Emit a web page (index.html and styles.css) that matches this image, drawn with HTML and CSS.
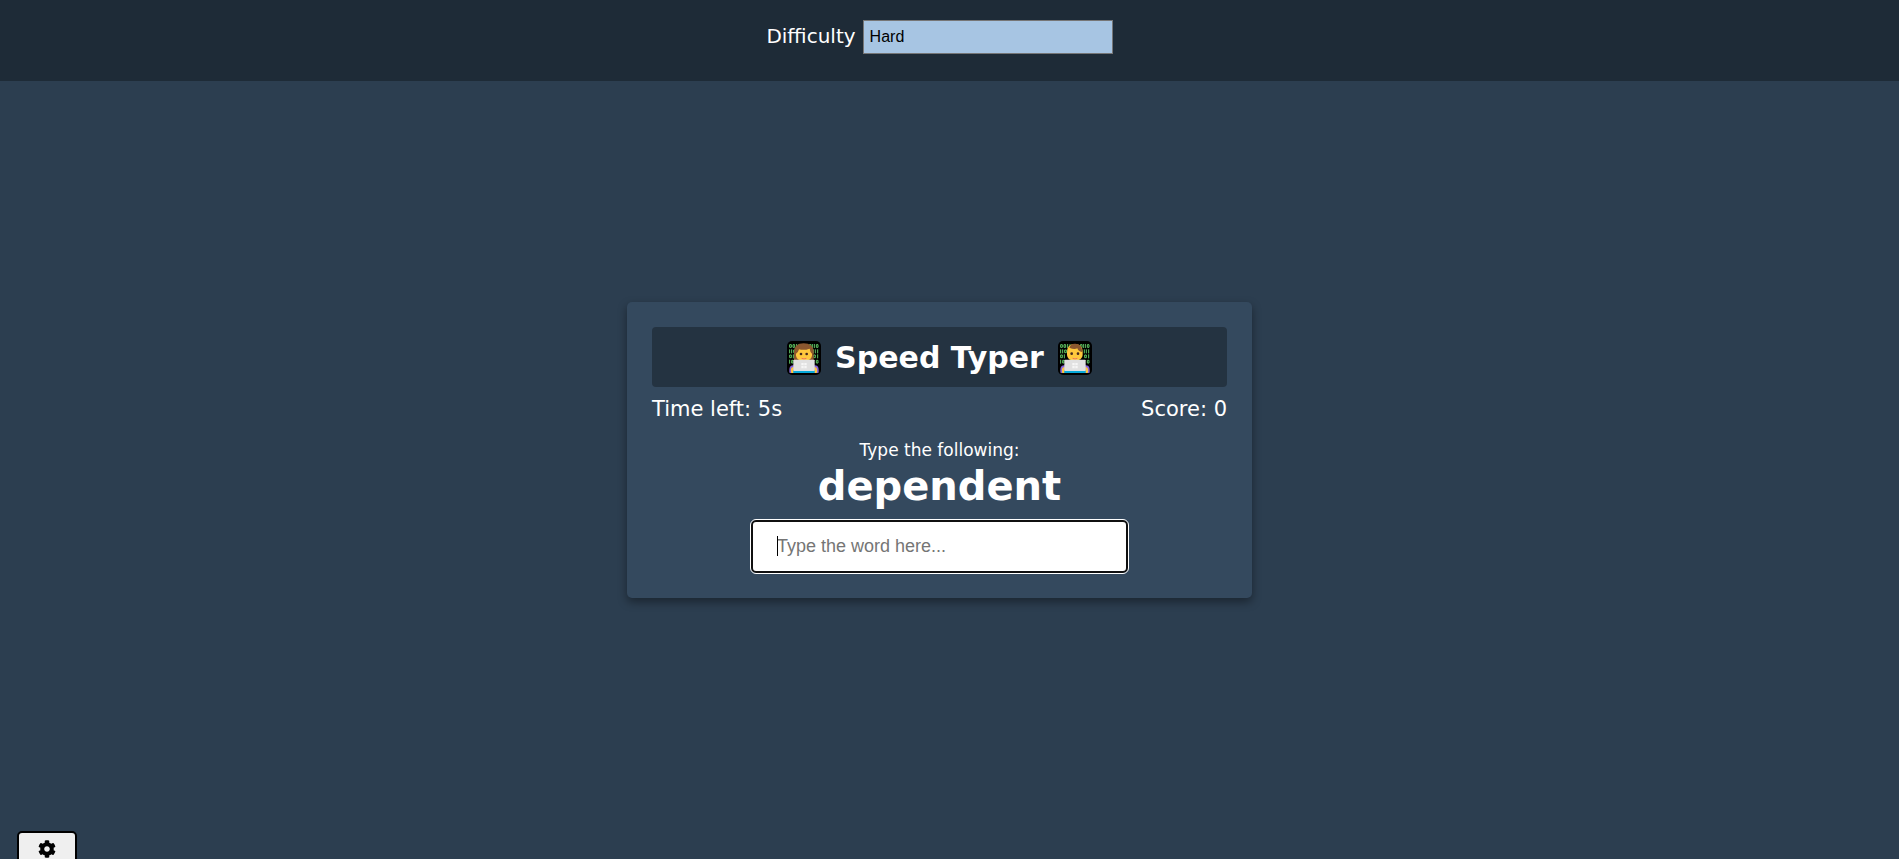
FILE: index.html
```html
<!DOCTYPE html>
<html lang="en">
<head>
<meta charset="utf-8">
<title>Speed Typer</title>
<link rel="stylesheet" href="styles.css">
</head>
<body>
<svg class="defs" aria-hidden="true">
  <symbol id="screen" viewBox="0 0 102 102">
    <rect width="102" height="102" rx="15" fill="#000"/>
    <g fill="none" stroke="#5fc563" stroke-width="3">
      <path d="M8 11h5v8H8zM18 11h5v8h-5zM29 9v12M36 9v12M67 11h5v8h-5zM76 9v12M82 9v12M88 11h5v8h-5z"/>
      <path d="M8 25v12M14 25v12M20 27h5v8h-5zM79 25v12M85 25v12M92 25v12"/>
      <path d="M8 42h5v8H8zM19 40v12M80 42h5v8h-5zM92 40v12"/>
      <path d="M8 56v12M14 58h4v8h-4zM88 58h5v8h-5z"/>
    </g>
  </symbol>
  <symbol id="laptop" viewBox="0 0 102 102">
    <path d="M7 94V86q0-13 13-13h62q13 0 13 13v8q0 2-3 2H10q-3 0-3-2z" fill="#8765d6"/>
    <path d="M12 94V84q1-6 8-6v18h-6zM90 94V84q-1-6-8-6v18h6z" fill="#ffc83d"/>
    <rect x="19" y="88" width="64" height="8" fill="#08a9da"/>
    <rect x="19" y="56" width="64" height="34" rx="2" fill="#e1e1e1"/>
    <path d="M43 66h7v7h-7zM52 66h7v7h-7zM43 75h7v7h-7zM52 75h7v7h-7z" fill="#f6f6f6"/>
  </symbol>
</svg>

<header class="settings">
  <form class="settings-form">
    <label for="difficulty">Difficulty</label>
    <select id="difficulty" class="difficulty">
      <option>Easy</option>
      <option>Medium</option>
      <option selected>Hard</option>
    </select>
  </form>
</header>

<main class="stage">
  <section class="card">
    <h1 class="title">
      <svg class="emoji" viewBox="0 0 102 102" role="img" aria-label="Woman technologist">
        <use href="#screen"/>
        <path d="M21 57V31Q22 8 50 7q29 1 30 24v26z" fill="#8b572f"/>
        <path d="M27 38q7-4 9-13 15 4 32-2 1 9 7 15v6q-2 15-24 15T27 44z" fill="#ffc83d"/>
        <circle cx="42" cy="39" r="4" fill="#46291f"/><circle cx="59" cy="39" r="4" fill="#46291f"/>
        <path d="M44 52q7 4 14 0" fill="none" stroke="#ef7059" stroke-width="3"/>
        <use href="#laptop"/>
      </svg>
      <span>Speed Typer</span>
      <svg class="emoji" viewBox="0 0 102 102" role="img" aria-label="Man technologist">
        <use href="#screen"/>
        <path d="M27 34q0-25 23-25 24 0 24 25v8q-1 17-24 17-22 0-23-17z" fill="#ffc83d"/>
        <path d="M34 20Q37 7 52 8q19 1 20 18v7Q61 32 58 22q-9 5-24-2z" fill="#8b572f"/>
        <circle cx="41" cy="38" r="4" fill="#46291f"/><circle cx="60" cy="38" r="4" fill="#46291f"/>
        <path d="M44 52q7 4 14 0" fill="none" stroke="#ef7059" stroke-width="3"/>
        <use href="#laptop"/>
      </svg>
    </h1>
    <div class="stats">
      <span>Time left: 5s</span>
      <span>Score: 0</span>
    </div>
    <label class="prompt" for="word">Type the following:</label>
    <h2 class="word">dependent</h2>
    <div class="entry">
      <input id="word" class="word-input" type="text" placeholder="Type the word here..." autocomplete="off">
      <span class="caret" aria-hidden="true"></span>
    </div>
  </section>
</main>

<button class="gear" type="button" aria-label="Toggle settings">
  <svg class="gear-icon" viewBox="0 0 512 512" aria-hidden="true"><path d="M487.400 315.700l-42.600-24.600c4.300-23.200 4.300-47 0-70.200l42.600-24.600c4.900-2.800 7.100-8.600 5.500-14-11.100-35.600-30-67.800-54.700-94.600-3.800-4.100-10-5.100-14.800-2.300L380.800 110c-17.900-15.400-38.500-27.300-60.800-35.100V25.800c0-5.600-3.900-10.500-9.400-11.700-36.700-8.200-74.300-7.800-109.200 0-5.500 1.200-9.400 6.100-9.400 11.700V75c-22.200 7.900-42.800 19.800-60.800 35.100L88.700 85.500c-4.900-2.800-11-1.900-14.800 2.300-24.700 26.700-43.600 58.900-54.700 94.600-1.700 5.400.6 11.200 5.500 14L67.300 221c-4.300 23.200-4.300 47 0 70.200l-42.600 24.600c-4.900 2.800-7.100 8.600-5.500 14 11.100 35.600 30 67.800 54.700 94.600 3.800 4.100 10 5.100 14.800 2.300l42.600-24.600c17.900 15.400 38.500 27.300 60.800 35.100v49.200c0 5.600 3.900 10.500 9.400 11.700 36.700 8.200 74.300 7.800 109.200 0 5.500-1.200 9.400-6.100 9.400-11.700v-49.200c22.200-7.900 42.800-19.800 60.800-35.100l42.600 24.600c4.900 2.800 11 1.900 14.800-2.300 24.700-26.700 43.600-58.900 54.700-94.600 1.500-5.500-.7-11.300-5.600-14.100zM256 336c-44.100 0-80-35.900-80-80s35.900-80 80-80 80 35.900 80 80-35.900 80-80 80z"/></svg>
</button>
</body>
</html>
```
FILE: styles.css
```css
* { box-sizing: border-box; }

body {
  display: flex;
  flex-direction: column;
  min-height: 100vh;
  margin: 0;
  overflow: hidden;
  background: #2c3e50;
  color: #fff;
  font-family: Verdana, "DejaVu Sans", sans-serif;
}

.defs { position: absolute; width: 0; height: 0; }

.settings {
  display: flex;
  justify-content: center;
  padding: 20px 20px 27px 0;
  background: rgba(0, 0, 0, 0.3);
}

.settings-form {
  display: flex;
  gap: 7px;
  font-size: 20px;
  line-height: 32px;
}

.difficulty {
  appearance: none;
  width: 250px;
  height: 34px;
  padding: 0 6px 2px;
  border: 1px solid #767676;
  border-radius: 0;
  background: #a7c5e3;
  color: #000;
  font: 16px "Liberation Sans", Arial, sans-serif;
}

.stage {
  display: flex;
  flex: 1;
  align-items: center;
  justify-content: center;
  padding: 0 20px 40px 0;
}

.card {
  display: flex;
  flex-direction: column;
  align-items: center;
  width: 625px;
  max-width: 100%;
  padding: 25px;
  border-radius: 5px;
  background: #34495e;
  box-shadow: 0 4px 10px rgba(0, 0, 0, 0.4);
}

.title {
  display: flex;
  align-items: center;
  justify-content: center;
  gap: 14px;
  width: 100%;
  margin: 0;
  padding: 11px 10px 9px;
  border-radius: 4px;
  background: rgba(0, 0, 0, 0.3);
  font-size: 30px;
  line-height: 40px;
}

.emoji { width: 34px; height: 34px; }

.stats {
  display: flex;
  justify-content: space-between;
  width: 100%;
  padding: 10px 0;
  font-size: 21px;
  line-height: 24px;
}

.prompt {
  margin-top: 8px;
  font-size: 17px;
  line-height: 23px;
}

.word {
  margin: 0;
  font-size: 40px;
  line-height: 48px;
}

.entry {
  position: relative;
  width: 377px;
  max-width: 100%;
  margin-top: 10px;
}

.word-input {
  display: block;
  width: 100%;
  height: 53px;
  padding: 0 24px;
  border: 2px solid #101010;
  border-radius: 5px;
  outline: 1px solid #fff;
  background: #fff;
  color: #000;
  font: 18px "Liberation Sans", Arial, sans-serif;
}

.word-input::placeholder { color: #757575; }

.caret {
  position: absolute;
  top: 16px;
  left: 26px;
  width: 1px;
  height: 20px;
  background: #000;
}

.gear {
  position: fixed;
  bottom: -8px;
  left: 17px;
  display: flex;
  align-items: center;
  justify-content: center;
  width: 60px;
  height: 36px;
  padding: 0;
  border: 2px solid #000;
  border-radius: 5px;
  background: #efefef;
}

.gear-icon { width: 18px; height: 18px; }
```
